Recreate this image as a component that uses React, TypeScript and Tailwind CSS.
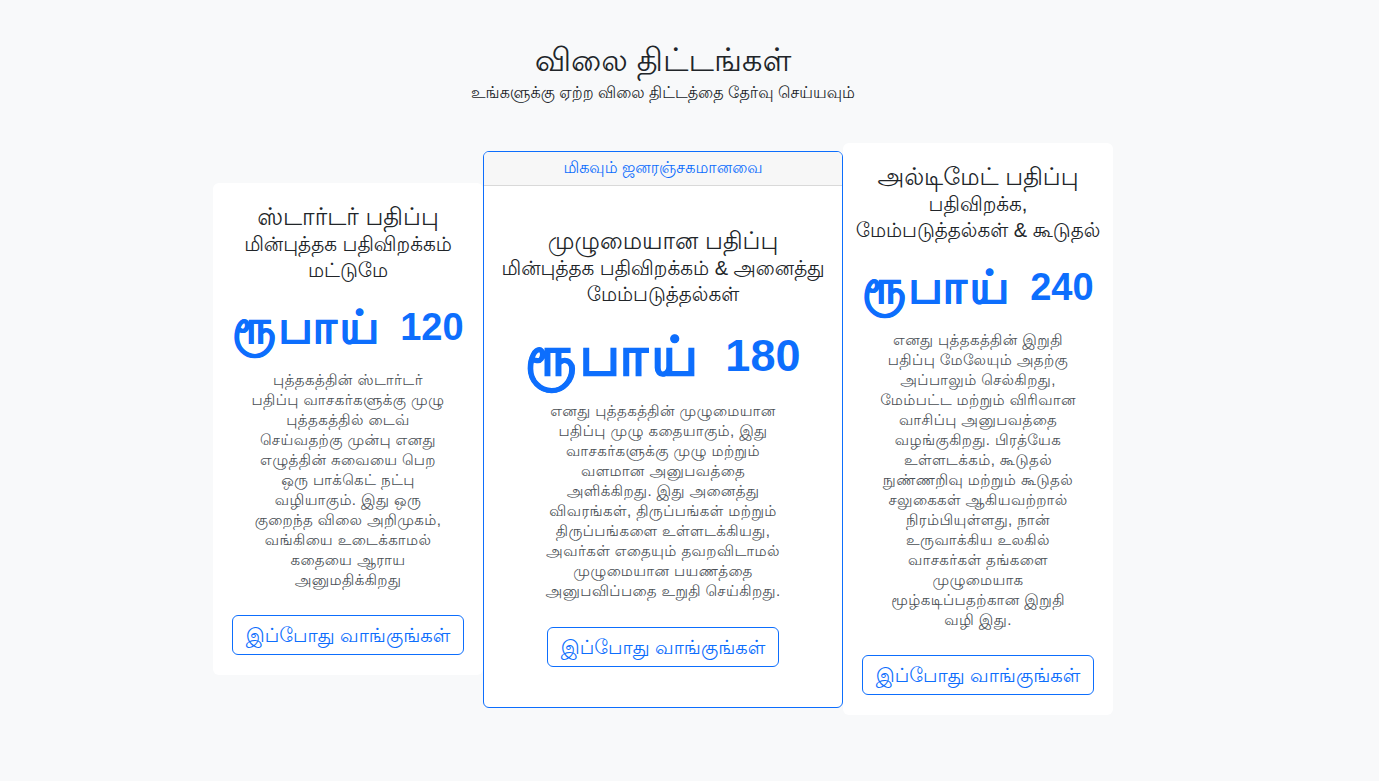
import React from "react";

type Plan = {
  name: string;
  sub: string[];
  word: string;
  amount: string;
  lines: string[];
  featured?: boolean;
};

const plans: Plan[] = [
  {
    name: "ஸ்டார்டர் பதிப்பு",
    sub: ["மின்புத்தக பதிவிறக்கம்", "மட்டுமே"],
    word: "ரூபாய்",
    amount: "120",
    lines: [
      "புத்தகத்தின் ஸ்டார்டர்",
      "பதிப்பு வாசகர்களுக்கு முழு",
      "புத்தகத்தில் டைவ்",
      "செய்வதற்கு முன்பு எனது",
      "எழுத்தின் சுவையை பெற",
      "ஒரு பாக்கெட் நட்பு",
      "வழியாகும். இது ஒரு",
      "குறைந்த விலை அறிமுகம்,",
      "வங்கியை உடைக்காமல்",
      "கதையை ஆராய",
      "அனுமதிக்கிறது",
    ],
  },
  {
    name: "முழுமையான பதிப்பு",
    sub: ["மின்புத்தக பதிவிறக்கம் & அனைத்து", "மேம்படுத்தல்கள்"],
    word: "ரூபாய்",
    amount: "180",
    lines: [
      "எனது புத்தகத்தின் முழுமையான",
      "பதிப்பு முழு கதையாகும், இது",
      "வாசகர்களுக்கு முழு மற்றும்",
      "வளமான அனுபவத்தை",
      "அளிக்கிறது. இது அனைத்து",
      "விவரங்கள், திருப்பங்கள் மற்றும்",
      "திருப்பங்களை உள்ளடக்கியது,",
      "அவர்கள் எதையும் தவறவிடாமல்",
      "முழுமையான பயணத்தை",
      "அனுபவிப்பதை உறுதி செய்கிறது.",
    ],
    featured: true,
  },
  {
    name: "அல்டிமேட் பதிப்பு",
    sub: ["பதிவிறக்க,", "மேம்படுத்தல்கள் & கூடுதல்"],
    word: "ரூபாய்",
    amount: "240",
    lines: [
      "எனது புத்தகத்தின் இறுதி",
      "பதிப்பு மேலேயும் அதற்கு",
      "அப்பாலும் செல்கிறது,",
      "மேம்பட்ட மற்றும் விரிவான",
      "வாசிப்பு அனுபவத்தை",
      "வழங்குகிறது. பிரத்யேக",
      "உள்ளடக்கம், கூடுதல்",
      "நுண்ணறிவு மற்றும் கூடுதல்",
      "சலுகைகள் ஆகியவற்றால்",
      "நிரம்பியுள்ளது, நான்",
      "உருவாக்கிய உலகில்",
      "வாசகர்கள் தங்களை",
      "முழுமையாக",
      "மூழ்கடிப்பதற்கான இறுதி",
      "வழி இது.",
    ],
  },
];

const BuyButton: React.FC = () => (
  <button className="h-[40px] px-[13px] rounded-md border border-[#0d6efd] text-[#0d6efd] text-[19.5px] leading-[24px] whitespace-nowrap">
    இப்போது வாங்குங்கள்
  </button>
);

const Description: React.FC<{ lines: string[] }> = ({ lines }) => (
  <p className="text-[15px] leading-[20px] tracking-[0.4px] text-[#4a4f55]">
    {lines.map((l) => (
      <span key={l} className="block whitespace-nowrap">{l}</span>
    ))}
  </p>
);

const CardBody: React.FC<{ plan: Plan }> = ({ plan }) => {
  const big = plan.featured;
  return (
    <>
      <h3 className="text-[24px] leading-[28px] text-[#212529] whitespace-nowrap">{plan.name}</h3>
      {plan.sub.map((s) => (
        <p key={s} className="text-[20px] leading-[26px] text-[#212529] whitespace-nowrap">{s}</p>
      ))}
      <div
        className={
          big
            ? "mt-[17px] h-[64px] flex items-center gap-[24px] font-bold text-[#0d6efd] leading-none"
            : "mt-[16px] h-[56px] flex items-center gap-[18px] font-bold text-[#0d6efd] leading-none"
        }
      >
        <span
          className={
            big
              ? "text-[54px] tracking-[3.5px] [-webkit-text-stroke:1px_#0d6efd]"
              : "text-[46px] tracking-[3px] [-webkit-text-stroke:0.8px_#0d6efd]"
          }
        >
          {plan.word}
        </span>
        <span className={big ? "text-[45px]" : "text-[38px]"}>{plan.amount}</span>
      </div>
      <div className={big ? "mt-[13px]" : "mt-[15px]"}>
        <Description lines={plan.lines} />
      </div>
      <div className={big ? "mt-[26px] flex" : "mt-[25px] flex"}>
        <BuyButton />
      </div>
    </>
  );
};

const PlanCard: React.FC<{ plan: Plan }> = ({ plan }) => {
  if (plan.featured) {
    return (
      <div className="w-[360px] bg-white border border-[#0d6efd] rounded-md overflow-hidden">
        <div className="h-[34px] flex items-center justify-center bg-[#f7f7f7] border-b border-[#d9d9d9] text-[16px] text-[#0d6efd]">
          மிகவும் ஜனரஞ்சகமானவை
        </div>
        <div className="flex flex-col items-center text-center pt-[41px] pb-[40px] px-4">
          <CardBody plan={plan} />
        </div>
      </div>
    );
  }
  return (
    <div className="w-[270px] bg-white rounded-md flex flex-col items-center text-center pt-[20px] pb-[20px] px-[8px]">
      <CardBody plan={plan} />
    </div>
  );
};

export default function App() {
  return (
    <div
      className="min-h-screen bg-[#f8f9fa] pr-[53px] pt-[40px]"
      style={{ fontFamily: '"Liberation Sans", "Lohit Tamil", sans-serif' }}
    >
      <div className="text-center">
        <h1 className="text-[32px] leading-[40px] text-[#212529]">விலை திட்டங்கள்</h1>
        <p className="mt-[3px] text-[16px] leading-[20px] text-[#212529]">
          உங்களுக்கு ஏற்ற விலை திட்டத்தை தேர்வு செய்யவும்
        </p>
      </div>
      <div className="mt-[40px] flex items-center justify-center">
        {plans.map((p) => (
          <PlanCard key={p.name} plan={p} />
        ))}
      </div>
    </div>
  );
}
